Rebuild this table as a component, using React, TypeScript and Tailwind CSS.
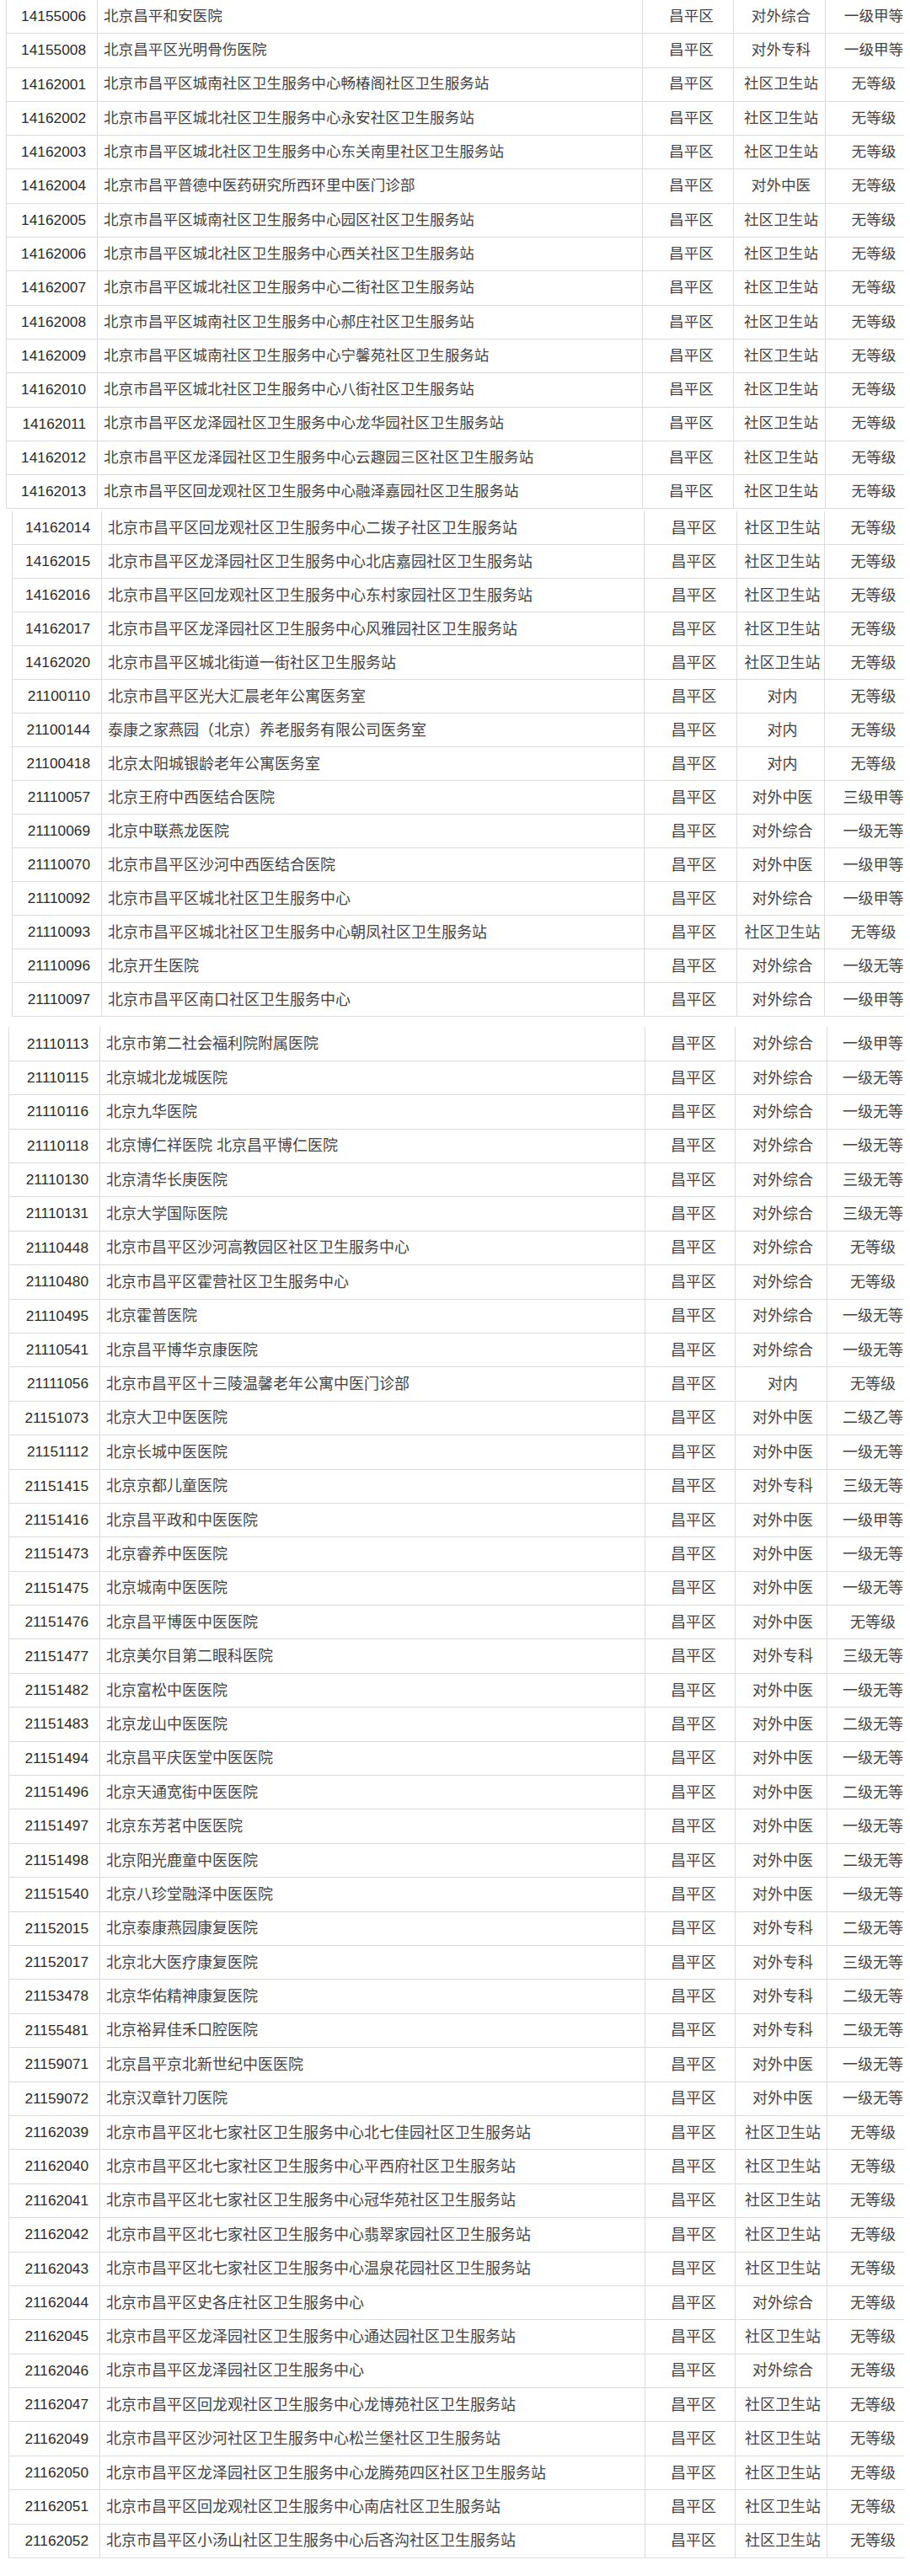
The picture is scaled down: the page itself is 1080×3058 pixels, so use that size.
type Row = [string, string, string, string];

const S = '社区卫生站';
const N = '无等级';

const seg1: Row[] = [
  ['14155006', '北京昌平和安医院', '对外综合', '一级甲等'],
  ['14155008', '北京昌平区光明骨伤医院', '对外专科', '一级甲等'],
  ['14162001', '北京市昌平区城南社区卫生服务中心畅椿阁社区卫生服务站', S, N],
  ['14162002', '北京市昌平区城北社区卫生服务中心永安社区卫生服务站', S, N],
  ['14162003', '北京市昌平区城北社区卫生服务中心东关南里社区卫生服务站', S, N],
  ['14162004', '北京市昌平普德中医药研究所西环里中医门诊部', '对外中医', N],
  ['14162005', '北京市昌平区城南社区卫生服务中心园区社区卫生服务站', S, N],
  ['14162006', '北京市昌平区城北社区卫生服务中心西关社区卫生服务站', S, N],
  ['14162007', '北京市昌平区城北社区卫生服务中心二街社区卫生服务站', S, N],
  ['14162008', '北京市昌平区城南社区卫生服务中心郝庄社区卫生服务站', S, N],
  ['14162009', '北京市昌平区城南社区卫生服务中心宁馨苑社区卫生服务站', S, N],
  ['14162010', '北京市昌平区城北社区卫生服务中心八街社区卫生服务站', S, N],
  ['14162011', '北京市昌平区龙泽园社区卫生服务中心龙华园社区卫生服务站', S, N],
  ['14162012', '北京市昌平区龙泽园社区卫生服务中心云趣园三区社区卫生服务站', S, N],
  ['14162013', '北京市昌平区回龙观社区卫生服务中心融泽嘉园社区卫生服务站', S, N],
];

const seg2: Row[] = [
  ['14162014', '北京市昌平区回龙观社区卫生服务中心二拨子社区卫生服务站', S, N],
  ['14162015', '北京市昌平区龙泽园社区卫生服务中心北店嘉园社区卫生服务站', S, N],
  ['14162016', '北京市昌平区回龙观社区卫生服务中心东村家园社区卫生服务站', S, N],
  ['14162017', '北京市昌平区龙泽园社区卫生服务中心风雅园社区卫生服务站', S, N],
  ['14162020', '北京市昌平区城北街道一街社区卫生服务站', S, N],
  ['21100110', '北京市昌平区光大汇晨老年公寓医务室', '对内', N],
  ['21100144', '泰康之家燕园（北京）养老服务有限公司医务室', '对内', N],
  ['21100418', '北京太阳城银龄老年公寓医务室', '对内', N],
  ['21110057', '北京王府中西医结合医院', '对外中医', '三级甲等'],
  ['21110069', '北京中联燕龙医院', '对外综合', '一级无等'],
  ['21110070', '北京市昌平区沙河中西医结合医院', '对外中医', '一级甲等'],
  ['21110092', '北京市昌平区城北社区卫生服务中心', '对外综合', '一级甲等'],
  ['21110093', '北京市昌平区城北社区卫生服务中心朝凤社区卫生服务站', S, N],
  ['21110096', '北京开生医院', '对外综合', '一级无等'],
  ['21110097', '北京市昌平区南口社区卫生服务中心', '对外综合', '一级甲等'],
];

const seg3: Row[] = [
  ['21110113', '北京市第二社会福利院附属医院', '对外综合', '一级甲等'],
  ['21110115', '北京城北龙城医院', '对外综合', '一级无等'],
  ['21110116', '北京九华医院', '对外综合', '一级无等'],
  ['21110118', '北京博仁祥医院 北京昌平博仁医院', '对外综合', '一级无等'],
  ['21110130', '北京清华长庚医院', '对外综合', '三级无等'],
  ['21110131', '北京大学国际医院', '对外综合', '三级无等'],
  ['21110448', '北京市昌平区沙河高教园区社区卫生服务中心', '对外综合', N],
  ['21110480', '北京市昌平区霍营社区卫生服务中心', '对外综合', N],
  ['21110495', '北京霍普医院', '对外综合', '一级无等'],
  ['21110541', '北京昌平博华京康医院', '对外综合', '一级无等'],
  ['21111056', '北京市昌平区十三陵温馨老年公寓中医门诊部', '对内', N],
  ['21151073', '北京大卫中医医院', '对外中医', '二级乙等'],
  ['21151112', '北京长城中医医院', '对外中医', '一级无等'],
  ['21151415', '北京京都儿童医院', '对外专科', '三级无等'],
  ['21151416', '北京昌平政和中医医院', '对外中医', '一级甲等'],
  ['21151473', '北京睿养中医医院', '对外中医', '一级无等'],
  ['21151475', '北京城南中医医院', '对外中医', '一级无等'],
  ['21151476', '北京昌平博医中医医院', '对外中医', N],
  ['21151477', '北京美尔目第二眼科医院', '对外专科', '三级无等'],
  ['21151482', '北京富松中医医院', '对外中医', '一级无等'],
  ['21151483', '北京龙山中医医院', '对外中医', '二级无等'],
  ['21151494', '北京昌平庆医堂中医医院', '对外中医', '一级无等'],
  ['21151496', '北京天通宽街中医医院', '对外中医', '二级无等'],
  ['21151497', '北京东芳茗中医医院', '对外中医', '一级无等'],
  ['21151498', '北京阳光鹿童中医医院', '对外中医', '二级无等'],
  ['21151540', '北京八珍堂融泽中医医院', '对外中医', '一级无等'],
  ['21152015', '北京泰康燕园康复医院', '对外专科', '二级无等'],
  ['21152017', '北京北大医疗康复医院', '对外专科', '三级无等'],
  ['21153478', '北京华佑精神康复医院', '对外专科', '二级无等'],
  ['21155481', '北京裕昇佳禾口腔医院', '对外专科', '二级无等'],
  ['21159071', '北京昌平京北新世纪中医医院', '对外中医', '一级无等'],
  ['21159072', '北京汉章针刀医院', '对外中医', '一级无等'],
  ['21162039', '北京市昌平区北七家社区卫生服务中心北七佳园社区卫生服务站', S, N],
  ['21162040', '北京市昌平区北七家社区卫生服务中心平西府社区卫生服务站', S, N],
  ['21162041', '北京市昌平区北七家社区卫生服务中心冠华苑社区卫生服务站', S, N],
  ['21162042', '北京市昌平区北七家社区卫生服务中心翡翠家园社区卫生服务站', S, N],
  ['21162043', '北京市昌平区北七家社区卫生服务中心温泉花园社区卫生服务站', S, N],
  ['21162044', '北京市昌平区史各庄社区卫生服务中心', '对外综合', N],
  ['21162045', '北京市昌平区龙泽园社区卫生服务中心通达园社区卫生服务站', S, N],
  ['21162046', '北京市昌平区龙泽园社区卫生服务中心', '对外综合', N],
  ['21162047', '北京市昌平区回龙观社区卫生服务中心龙博苑社区卫生服务站', S, N],
  ['21162049', '北京市昌平区沙河社区卫生服务中心松兰堡社区卫生服务站', S, N],
  ['21162050', '北京市昌平区龙泽园社区卫生服务中心龙腾苑四区社区卫生服务站', S, N],
  ['21162051', '北京市昌平区回龙观社区卫生服务中心南店社区卫生服务站', S, N],
  ['21162052', '北京市昌平区小汤山社区卫生服务中心后吝沟社区卫生服务站', S, N],
];

// each stitched piece of the screenshot sits a few px off from the others
type Layout = {
  wrap: string;
  row: string;
  code: string;
  name: string;
  region: string;
  type: string;
  level: string;
};

const layout1: Layout = {
  wrap: 'ml-[7px] w-[1066px] text-[17.6px]',
  row: 'h-[40.3px]',
  code: 'w-[108px]',
  name: 'w-[647px]',
  region: 'w-[108px]',
  type: 'w-[109px]',
  level: 'w-[94px] pl-[20px]',
};

const layout2: Layout = {
  wrap: 'ml-[14px] mt-[3px] w-[1059px] text-[18px]',
  row: 'h-[40px]',
  code: 'w-[106px]',
  name: 'w-[644px]',
  region: 'w-[110px]',
  type: 'w-[104px]',
  level: 'w-[95px] pl-[20px]',
};

const layout3: Layout = {
  wrap: 'ml-[10px] mt-[12px] w-[1063px] text-[18px]',
  row: 'h-[40.4px]',
  code: 'w-[108px]',
  name: 'w-[647px]',
  region: 'w-[107px]',
  type: 'w-[109px]',
  level: 'w-[92px] pl-[16px]',
};

function Segment({ rows, l }: { rows: Row[]; l: Layout }) {
  return (
    <div className={`${l.wrap} border-l border-[#dcdcdc]`}>
      {rows.map(([code, name, type, level]) => (
        <div key={code} className={`${l.row} flex border-b border-[#dcdcdc]`}>
          <div className={`${l.code} shrink-0 flex items-center justify-end pr-[13px] border-r border-[#dcdcdc] text-[17.3px] text-[#2b2b2b]`}>
            {code}
          </div>
          <div className={`${l.name} shrink-0 flex items-center pl-[7px] border-r border-[#dcdcdc] whitespace-nowrap`}>
            {name}
          </div>
          <div className={`${l.region} shrink-0 flex items-center justify-center pl-[8px] border-r border-[#dcdcdc]`}>
            昌平区
          </div>
          <div className={`${l.type} shrink-0 flex items-center justify-center pl-[4px] border-r border-[#dcdcdc] whitespace-nowrap`}>
            {type}
          </div>
          <div className={`${l.level} shrink-0 flex items-center justify-center whitespace-nowrap`}>
            {level}
          </div>
        </div>
      ))}
    </div>
  );
}

export default function App() {
  return (
    <div
      className="w-[1080px] min-h-[3058px] bg-white leading-none text-[#444]"
      style={{ fontFamily: '"Liberation Sans", "Noto Sans CJK SC", sans-serif' }}
    >
      <Segment rows={seg1} l={layout1} />
      <Segment rows={seg2} l={layout2} />
      <Segment rows={seg3} l={layout3} />
    </div>
  );
}
